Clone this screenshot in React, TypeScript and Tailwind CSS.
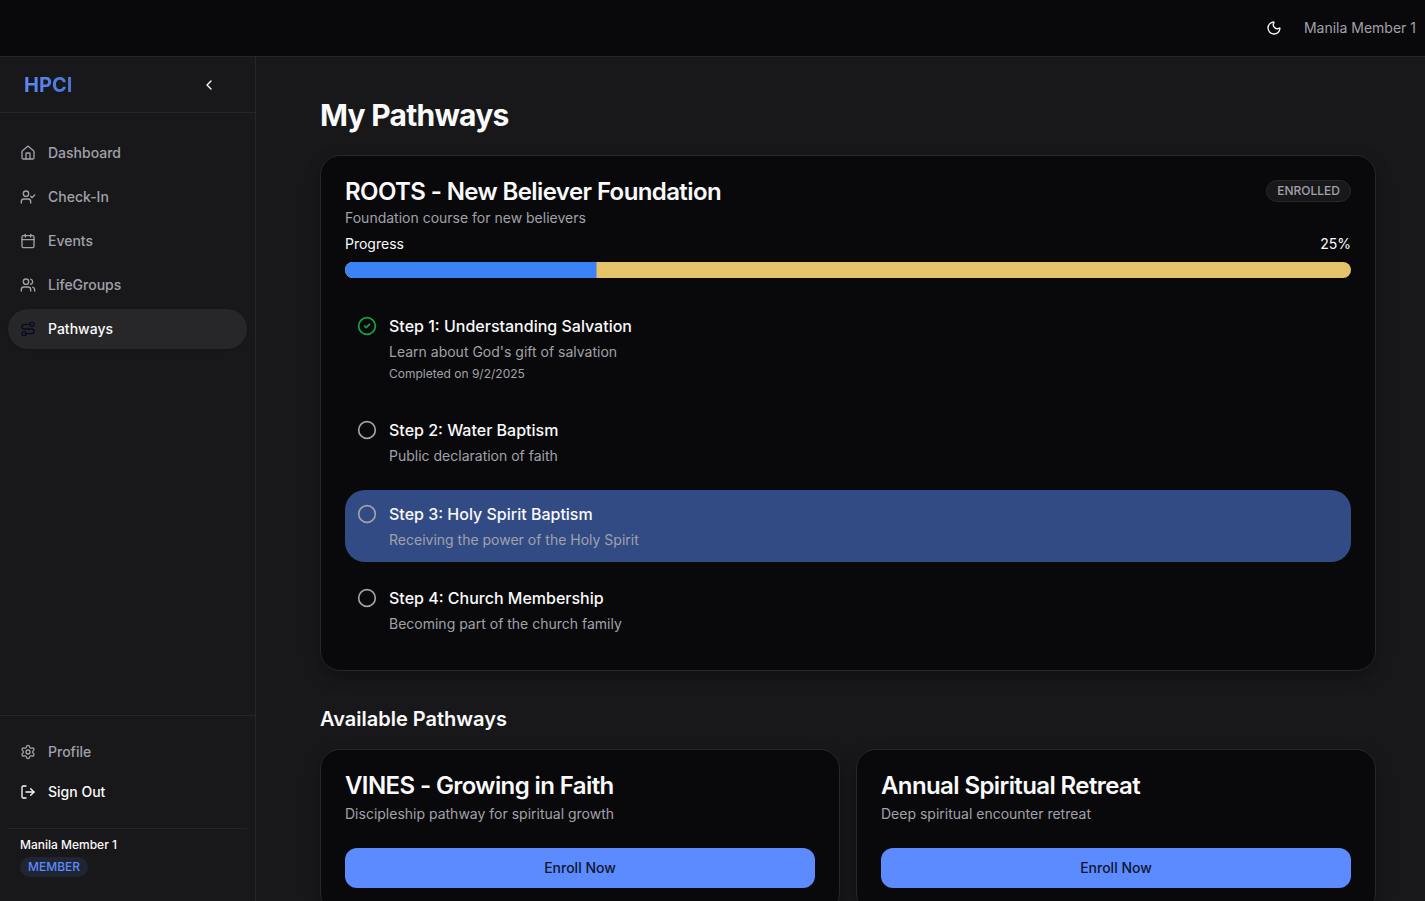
import React from "react";
import {
  Calendar,
  ChevronLeft,
  Circle,
  CircleCheck,
  House,
  LogOut,
  Moon,
  Route,
  Settings,
  UserCheck,
  Users,
} from "lucide-react";

const navItems = [
  { label: "Dashboard", icon: House },
  { label: "Check-In", icon: UserCheck },
  { label: "Events", icon: Calendar },
  { label: "LifeGroups", icon: Users },
  { label: "Pathways", icon: Route, active: true },
];

type Step = {
  title: string;
  description: string;
  completed?: string;
  current?: boolean;
};

const steps: Step[] = [
  {
    title: "Step 1: Understanding Salvation",
    description: "Learn about God's gift of salvation",
    completed: "Completed on 9/2/2025",
  },
  { title: "Step 2: Water Baptism", description: "Public declaration of faith" },
  {
    title: "Step 3: Holy Spirit Baptism",
    description: "Receiving the power of the Holy Spirit",
    current: true,
  },
  { title: "Step 4: Church Membership", description: "Becoming part of the church family" },
];

const available = [
  { title: "VINES - Growing in Faith", description: "Discipleship pathway for spiritual growth" },
  { title: "Annual Spiritual Retreat", description: "Deep spiritual encounter retreat" },
];

function Header() {
  return (
    <header className="flex h-[57px] shrink-0 items-center justify-end gap-[22px] border-b border-[#27272a] bg-[#09090b] pr-[9px]">
      <Moon className="size-4 text-[#fafafa]" />
      <span className="text-sm text-[#a1a1aa]">Manila Member 1</span>
    </header>
  );
}

function Sidebar() {
  return (
    <aside className="flex w-64 shrink-0 flex-col border-r border-[#27272a] bg-[#18181b]">
      <div className="flex h-14 shrink-0 items-center justify-between border-b border-[#27272a] pr-[38px] pl-6">
        <span className="bg-linear-to-r from-[#5c8aff] to-[#4a76d0] bg-clip-text text-xl font-bold text-transparent">
          HPCI
        </span>
        <ChevronLeft className="size-4 text-[#fafafa]" />
      </div>
      <nav className="flex flex-1 flex-col gap-1 px-2 pt-5">
        {navItems.map(({ label, icon: Icon, active }) => (
          <a
            key={label}
            className={
              active
                ? "flex h-10 items-center gap-3 rounded-full bg-[#27272a] px-3 text-sm font-medium text-[#fafafa] shadow-sm"
                : "flex h-10 items-center gap-3 rounded-full px-3 text-sm font-medium text-[#a1a1aa]"
            }
          >
            <Icon className={active ? "size-4 text-[#060b20]" : "size-4"} />
            {label}
          </a>
        ))}
      </nav>
      <div className="h-[186px] shrink-0 border-t border-[#27272a] px-2 pt-4">
        <a className="flex h-10 items-center gap-3 px-3 text-sm font-medium text-[#a1a1aa]">
          <Settings className="size-4" />
          Profile
        </a>
        <button className="flex h-10 w-full items-center gap-3 px-3 text-sm font-medium text-[#fafafa]">
          <LogOut className="size-4" />
          Sign Out
        </button>
        <div className="mt-4 border-t border-[#27272a] px-3 pt-2">
          <p className="text-xs font-medium text-[#fafafa]">Manila Member 1</p>
          <span className="mt-1 inline-flex h-5 items-center rounded-full bg-[#1f2632] px-2 text-xs font-medium text-[#5c8aff]">
            MEMBER
          </span>
        </div>
      </div>
    </aside>
  );
}

function StepRow({ step }: { step: Step }) {
  return (
    <li
      className={
        step.current
          ? "flex items-start gap-3 rounded-[20px] bg-[#324b84] p-3"
          : "flex items-start gap-3 rounded-[20px] p-3"
      }
    >
      {step.completed ? (
        <CircleCheck className="mt-0.5 size-5 text-[#16a34a]" />
      ) : (
        <Circle className="mt-0.5 size-5 text-[#a1a1aa]" />
      )}
      <div>
        <h3 className="text-base font-medium text-[#fafafa]">{step.title}</h3>
        <p className="mt-1 text-sm text-[#a1a1aa]">{step.description}</p>
        {step.completed && <p className="mt-1 text-xs text-[#a1a1aa]">{step.completed}</p>}
      </div>
    </li>
  );
}

export default function App() {
  return (
    <div className="flex h-[901px] flex-col overflow-hidden bg-[#18181b] font-['Inter',sans-serif] text-[#fafafa]">
      <Header />
      <div className="flex min-h-0 flex-1">
        <Sidebar />
        <main className="min-w-0 flex-1 overflow-hidden pt-10 pr-[49px] pl-16">
          <h1 className="text-3xl font-bold tracking-tight">My Pathways</h1>

          <section className="mt-[22px] rounded-[20px] border border-[#27272a] bg-[#09090b] p-6 shadow-[0_6px_16px_-1px_rgba(0,0,0,0.35)]">
            <div className="flex items-start justify-between">
              <div>
                <h2 className="text-2xl leading-none font-semibold tracking-tight">
                  ROOTS - New Believer Foundation
                </h2>
                <p className="mt-1 text-sm text-[#a1a1aa]">
                  Foundation course for new believers
                </p>
              </div>
              <span className="flex h-[22px] items-center rounded-full border border-[#27272a] bg-[#18181b] px-2.5 text-xs font-medium text-[#a1a1aa]">
                ENROLLED
              </span>
            </div>
            <div className="mt-1.5 flex justify-between text-sm">
              <span>Progress</span>
              <span>25%</span>
            </div>
            <div className="mt-2 h-4 overflow-hidden rounded-full bg-[#e5c469]">
              <div className="h-full w-full -translate-x-3/4 bg-[#3b82f6]" />
            </div>
            <ul className="mt-6 flex flex-col gap-3">
              {steps.map((step) => (
                <StepRow key={step.title} step={step} />
              ))}
            </ul>
          </section>

          <h2 className="mt-[34px] text-xl font-semibold">Available Pathways</h2>
          <div className="mt-4 grid grid-cols-2 gap-4">
            {available.map(({ title, description }) => (
              <section
                key={title}
                className="rounded-[20px] border border-[#27272a] bg-[#09090b] p-6 shadow-[0_6px_16px_-1px_rgba(0,0,0,0.35)]"
              >
                <h3 className="text-2xl leading-none font-semibold tracking-tight">{title}</h3>
                <p className="mt-1.5 text-sm text-[#a1a1aa]">{description}</p>
                <button className="mt-6 h-10 w-full rounded-xl bg-[#5c8aff] text-sm font-medium text-[#0f172a]">
                  Enroll Now
                </button>
              </section>
            ))}
          </div>
        </main>
      </div>
    </div>
  );
}
